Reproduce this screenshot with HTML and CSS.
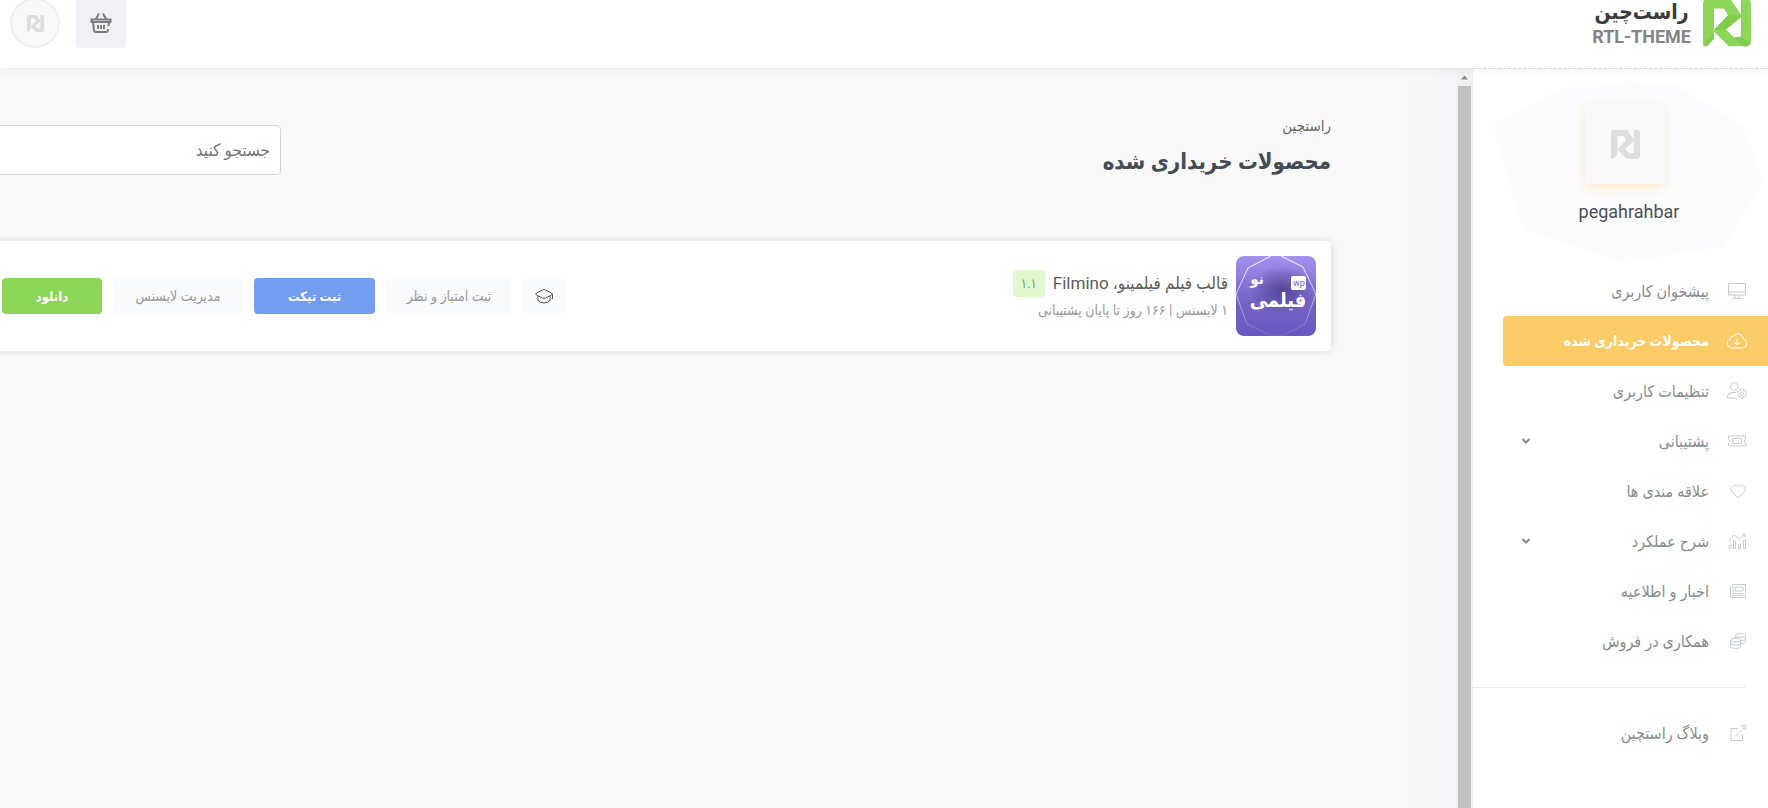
FILE: index.html
```html
<!DOCTYPE html>
<html lang="fa" dir="rtl">
<head>
  <meta charset="UTF-8">
  <meta name="viewport" content="width=device-width, initial-scale=1.0">
  <title>محصولات خریداری شده</title>
  <link rel="stylesheet" href="styles.css">
</head>
<body>

  <!-- Shared logo mark -->
  <svg class="sprite" aria-hidden="true">
    <symbol id="mark" viewBox="0 0 48 48">
      <path fill-rule="evenodd" d="M5 0H27L38 16V0H43a5 5 0 0 1 5 5V43a5 5 0 0 1-5 5H26L10 32 25 17 21 10H11V40L4 48H3a3 3 0 0 1-3-3V5a5 5 0 0 1 5-5ZM38 19 23 31 31 39 38 38Z"/>
    </symbol>
  </svg>

  <header class="header">
    <a href="#" class="logo">
      <svg class="logo-mark" viewBox="0 0 48 48">
        <use href="#mark"/>
        <path class="logo-shade" d="M25 17 38 17 23 31 10 32ZM31 39 38 38 48 45 43 48H40ZM0 45 11 36V40L4 48Z"/>
      </svg>
      <span class="logo-text">
        <span class="logo-fa">راست‌چین</span>
        <span class="logo-en">RTL-THEME</span>
      </span>
    </a>
    <div class="header-actions">
      <button type="button" class="basket-btn" aria-label="سبد خرید">
        <svg viewBox="0 0 22 22">
          <path d="M6 7 9 1.500M16 7 13 1.500M1.500 7.500H20.500V10H1.500ZM3 10 4 18.500Q4.300 20 6 20H16Q18 20 18.200 17M18.600 14 19 10M8 13V17M11 13V17M14 13V17"/>
        </svg>
      </button>
      <a href="#" class="user-btn" aria-label="حساب کاربری"><svg><use href="#mark"/></svg></a>
    </div>
  </header>

  <div class="layout">
    <aside class="sidebar">
      <div class="profile">
        <svg class="profile-pattern" viewBox="0 0 295 210" preserveAspectRatio="none">
          <path d="M158 10 200 42 238 66 232 108 200 146 150 186 110 160 66 104 100 66 112 36Z"/>
          <path d="M20 60 90 20 200 16 270 60 290 120 250 190 150 206 50 170Z"/>
        </svg>
        <div class="profile-avatar"><svg><use href="#mark"/></svg></div>
        <div class="profile-name">pegahrahbar</div>
      </div>

      <nav class="menu">
        <a href="#" class="menu-item">
          <svg viewBox="0 0 20 20"><path d="M1.500 2.500H18.500V14H1.500ZM1.500 11H18.500M8 14V17M12 14V17M5.500 17.500H14.500"/></svg>
          <span>پیشخوان کاربری</span>
        </a>
        <a href="#" class="menu-item active">
          <svg viewBox="0 0 20 20"><path d="M5 17A4.400 4.400 0 0 1 3 8.600 4 4 0 0 1 6.500 5 5.600 5.600 0 0 1 16.500 8.200 4.500 4.500 0 0 1 15.500 17ZM10 7.500V14M7 11 10 14 13 11"/></svg>
          <span>محصولات خریداری شده</span>
        </a>
        <a href="#" class="menu-item">
          <svg viewBox="0 0 20 20"><path d="M11 5.500A3.800 3.800 0 1 1 3.400 5.500 3.800 3.800 0 0 1 11 5.500ZM10 17H.700V15Q1 11.500 5 11.500H9"/><path d="M14.500 8 16 8 16.500 9.600 18 9 19.300 11 18.300 12.500 19.300 14 18 16 16.500 15.500 16 17H14L13.500 15.500 12 16 10.700 14 11.700 12.500 10.700 11 12 9 13.500 9.600 14 8Z"/><circle cx="15" cy="12.500" r="1.600"/></svg>
          <span>تنظیمات کاربری</span>
        </a>
        <a href="#" class="menu-item">
          <svg viewBox="0 0 20 20"><path d="M1.500 5H18.500V8.200A2 2 0 0 0 18.500 12V15H1.500V12A2 2 0 0 0 1.500 8.200ZM5.500 7.500H14.500V12.500H5.500Z"/></svg>
          <span>پشتیبانی</span>
          <svg class="chevron" viewBox="0 0 10 10"><path d="M1.500 3 5 6.500 8.500 3"/></svg>
        </a>
        <a href="#" class="menu-item">
          <svg viewBox="0 0 20 20"><path d="M11 17 5 10.800A4 4 0 0 1 11 5.500 4 4 0 0 1 17.400 10.500Z"/></svg>
          <span>علاقه مندی ها</span>
        </a>
        <a href="#" class="menu-item">
          <svg viewBox="0 0 20 20"><path d="M2 14H4V17.500H2ZM6.500 10H8.500V17.500H6.500ZM11.500 13H13.500V17.500H11.500ZM16.500 9H18.500V17.500H16.500ZM1.500 9.500 7 4 12.500 8 18 3.500M15.500 3.500H18V6"/></svg>
          <span>شرح عملکرد</span>
          <svg class="chevron" viewBox="0 0 10 10"><path d="M1.500 3 5 6.500 8.500 3"/></svg>
        </a>
        <a href="#" class="menu-item">
          <svg viewBox="0 0 20 20"><path d="M6 3.500H18.500V16.500H4.500Q3.500 16.500 3.500 15V5M6 3.500V15Q6 16.500 4.500 16.500M8.500 6H16V10H8.500ZM8 12.500H16.500M8 14.500H16.500"/></svg>
          <span>اخبار و اطلاعیه</span>
        </a>
        <a href="#" class="menu-item">
          <svg viewBox="0 0 20 20"><ellipse cx="13.500" cy="4.500" rx="5" ry="2"/><ellipse cx="8.500" cy="9" rx="5" ry="2"/><path d="M3.500 9V15.500C3.500 18 13.500 18 13.500 15.500V9M3.500 12.200C3.500 14.700 13.500 14.700 13.500 12.200M8.500 4.500V7M18.500 4.500V11Q18 12.500 13.500 12.700M18.500 8Q18 9.500 13.500 9.700"/></svg>
          <span>همکاری در فروش</span>
        </a>
        <hr class="menu-divider">
        <a href="#" class="menu-item">
          <svg viewBox="0 0 20 20"><path d="M11 5.500H4V17.500H15.500V11M8.500 13 17.500 4M14 2.500H18.500V7L17 5.500 15.500 4Z"/></svg>
          <span>وبلاگ راستچین</span>
        </a>
      </nav>
    </aside>

    <div class="scrollbar" aria-hidden="true">
      <svg viewBox="0 0 17 17"><path d="M5 11 8.500 7 12 11Z"/></svg>
      <div class="scrollbar-thumb"></div>
    </div>

    <main class="main">
      <div class="page-head">
        <div>
          <div class="breadcrumb">راستچین</div>
          <h1>محصولات خریداری شده</h1>
        </div>
        <input type="search" class="search-input" placeholder="جستجو کنید" aria-label="جستجو">
      </div>

      <section class="product-card">
        <svg class="product-thumb" viewBox="0 0 80 80" role="img" aria-label="فیلمینو">
          <defs>
            <linearGradient id="thumbBg" x1="0" y1="0" x2="0" y2="1">
              <stop offset="0" stop-color="#a591ef"/>
              <stop offset=".55" stop-color="#7565c4"/>
              <stop offset="1" stop-color="#6a57bf"/>
            </linearGradient>
            <radialGradient id="thumbGlow">
              <stop offset="0" stop-color="#40337f" stop-opacity=".7"/>
              <stop offset="1" stop-color="#40337f" stop-opacity="0"/>
            </radialGradient>
            <linearGradient id="thumbLine" x1="0" y1="0" x2="0" y2="1">
              <stop offset="0" stop-color="#fff"/>
              <stop offset="1" stop-color="#fff" stop-opacity=".1"/>
            </linearGradient>
          </defs>
          <rect width="80" height="80" rx="8" fill="url(#thumbBg)"/>
          <ellipse cx="46" cy="34" rx="32" ry="24" fill="url(#thumbGlow)"/>
          <path d="M35 0 12 12 0 38 11 68 34 79H48L69 68 80 38 67 11 45 0" fill="none" stroke="url(#thumbLine)"/>
          <text class="thumb-title" x="42" y="51">فیلمی</text>
          <text class="thumb-title thumb-small" x="21" y="28">نو</text>
          <rect x="55" y="20" width="15" height="14" rx="2" fill="#fff"/>
          <text class="thumb-wp" x="63" y="30">wp</text>
        </svg>
        <div class="product-info">
          <div class="product-title">
            <span>قالب فیلم فیلمینو، Filmino</span>
            <span class="version">۱.۱</span>
          </div>
          <div class="product-meta">۱ لایسنس | ۱۶۶ روز تا پایان پشتیبانی</div>
        </div>
        <div class="product-actions">
          <button type="button" class="btn btn-icon" aria-label="آموزش">
            <svg viewBox="0 0 20 20"><path d="M2.500 7 8.500 4Q10 3.400 11.500 4L17.500 7Q19 8 17.500 9L11.500 12Q10 12.600 8.500 12L2.500 9Q1 8 2.500 7ZM4 10V14Q5 17 10 17T16 14V10M18.500 8V13"/></svg>
          </button>
          <button type="button" class="btn btn-review">ثبت امتیاز و نظر</button>
          <button type="button" class="btn btn-ticket">ثبت تیکت</button>
          <button type="button" class="btn btn-license">مدیریت لایسنس</button>
          <button type="button" class="btn btn-download">دانلود</button>
        </div>
      </section>
    </main>
  </div>

</body>
</html>
```
FILE: styles.css
```css
* {
  box-sizing: border-box;
  margin: 0;
  padding: 0;
}

body {
  font-family: Roboto, "DejaVu Sans Condensed", "DejaVu Sans", sans-serif;
  font-size: 14px;
  color: #495057;
  background-color: #f9f9f9;
  min-height: 100vh;
  display: flex;
  flex-direction: column;
  overflow: hidden;
}

a {
  color: inherit;
  text-decoration: none;
}

button, input {
  font: inherit;
}

.sprite {
  position: absolute;
  width: 0;
  height: 0;
}

/* Header */
.header {
  display: flex;
  justify-content: space-between;
  align-items: flex-start;
  margin-top: -2px;
  padding: 0 17px 20px 10px;
  background-color: #fff;
  box-shadow: 0 2px 8px rgba(0, 0, 0, 0.06);
  position: relative;
  z-index: 1;
}

.logo {
  display: flex;
  gap: 12px;
}

.logo-mark {
  width: 48px;
  height: 49px;
  fill: #8cd658;
}

.logo-shade {
  fill: #6fbd3e;
  opacity: 0.4;
}

.logo-text {
  display: flex;
  flex-direction: column;
  font-weight: bold;
  text-align: center;
}

.logo-fa {
  font-size: 21px;
  line-height: 28px;
  color: #3c3c3c;
}

.logo-en {
  font-size: 18px;
  line-height: 22px;
  color: #858585;
}

.header-actions {
  display: flex;
  gap: 16px;
}

.basket-btn {
  width: 50px;
  height: 50px;
  border: none;
  border-radius: 4px;
  background-color: #f0f1f6;
}

.basket-btn svg {
  width: 22px;
  height: 22px;
  fill: none;
  stroke: #7c7c7c;
  stroke-width: 2;
  vertical-align: middle;
}

.user-btn {
  display: flex;
  align-items: center;
  justify-content: center;
  width: 50px;
  height: 50px;
  border: 2px solid #efefef;
  border-radius: 50%;
  background-color: #f9f9f9;
}

.user-btn svg {
  width: 17px;
  height: 17px;
  fill: #dedede;
}

.layout {
  display: flex;
  flex: 1;
}

/* Sidebar */
.sidebar {
  width: 295px;
  flex-shrink: 0;
  background-color: #fff;
  border-top: 1px dashed #dcdce2;
}

.profile {
  display: flex;
  flex-direction: column;
  align-items: center;
  height: 197px;
  padding: 35px 0 0 9px;
  position: relative;
}

.profile-pattern {
  position: absolute;
  inset: 0;
  width: 100%;
  height: 100%;
  fill: #eef0fa;
  opacity: 0.15;
}

.profile-avatar {
  display: flex;
  align-items: center;
  justify-content: center;
  width: 80px;
  height: 80px;
  background-color: #f9f9f9;
  box-shadow: 0 4px 10px rgba(251, 203, 104, 0.35);
  position: relative;
}

.profile-avatar svg {
  width: 29px;
  height: 29px;
  fill: #dedede;
}

.profile-name {
  margin-top: 16px;
  padding-left: 8px;
  font-size: 18px;
  line-height: 24px;
  position: relative;
}

.menu-item {
  display: flex;
  align-items: center;
  gap: 18px;
  height: 50px;
  padding: 0 21px 0 48px;
  font-size: 16px;
  color: #878b8f;
}

.menu-item svg {
  width: 20px;
  height: 20px;
  fill: none;
  stroke: #c9ccd1;
}

.menu-item .chevron {
  width: 10px;
  height: 10px;
  margin-right: auto;
  stroke: #888;
  stroke-width: 2;
}

.menu-item.active {
  margin-left: 30px;
  padding-left: 18px;
  background-color: #fbcb68;
  border-radius: 4px 0 0 4px;
  color: #fff;
  font-size: 14px;
  font-weight: bold;
}

.menu-item.active svg {
  stroke: #fff;
}

.menu-divider {
  margin: 21px 22px 20px 0;
  border: none;
  border-top: 1px solid #ebebeb;
}

/* Sidebar scroll track */
.scrollbar {
  width: 17px;
  flex-shrink: 0;
  display: flex;
  flex-direction: column;
  background-color: #f1f1f1;
}

.scrollbar svg {
  width: 17px;
  height: 18px;
  fill: #8b8b8b;
}

.scrollbar-thumb {
  flex: 1;
  margin: 0 2px;
  background-color: #c1c1c1;
}

/* Content */
.main {
  flex: 1;
  min-width: 0;
  padding: 46px 125px 0 0;
  background: linear-gradient(to left, #f3f5f8, #f9f9f9 60px);
}

.page-head {
  display: flex;
  justify-content: space-between;
  align-items: center;
  margin-bottom: 55px;
}

.breadcrumb {
  font-size: 15px;
  line-height: 24px;
  color: #666;
}

h1 {
  font-size: 22px;
  line-height: 48px;
  color: #434b54;
}

.search-input {
  width: 301px;
  height: 50px;
  margin-left: -20px;
  padding: 0 10px;
  border: 1px solid #d5d5d5;
  border-radius: 4px;
  background-color: #fff;
  font-size: 17px;
  outline: none;
}

.search-input::placeholder {
  color: #757575;
}

.product-card {
  display: flex;
  align-items: center;
  margin-left: -20px;
  padding: 15px 15px 15px 22px;
  background-color: #fff;
  border-radius: 4px;
  box-shadow: 0 0 8px rgba(0, 0, 0, 0.14);
}

.product-thumb {
  width: 80px;
  height: 80px;
  flex-shrink: 0;
}

.thumb-title {
  font-size: 20px;
  font-weight: bold;
  fill: #fff;
  text-anchor: middle;
}

.thumb-small {
  font-size: 15px;
}

.thumb-wp {
  font-size: 9px;
  fill: #7565c4;
  text-anchor: middle;
}

.product-info {
  margin-right: 8px;
}

.product-title {
  display: flex;
  align-items: center;
  gap: 8px;
  font-size: 17px;
  color: #5b5b5b;
}

.version {
  padding: 0 8px;
  border-radius: 4px;
  background-color: #e0f8cf;
  font-size: 13px;
  line-height: 27px;
  color: #6fa34c;
}

.product-meta {
  line-height: 26px;
  color: #999;
}

.product-actions {
  display: flex;
  gap: 12px;
  margin-right: auto;
}

.btn {
  height: 36px;
  border: none;
  border-radius: 4px;
  background-color: #f9fafc;
  font-size: 14px;
  color: #999;
  white-space: nowrap;
}

.btn-icon {
  width: 42px;
}

.btn-icon svg {
  width: 20px;
  height: 20px;
  fill: none;
  stroke: #555;
  vertical-align: middle;
}

.btn-review {
  width: 124px;
}

.btn-ticket {
  width: 121px;
  background-color: #739df0;
  color: #fff;
  font-weight: bold;
}

.btn-license {
  width: 128px;
}

.btn-download {
  width: 100px;
  background-color: #8cd658;
  color: #fff;
  font-weight: bold;
}

.btn-ticket, .btn-download {
  font-size: 13px;
}
```
